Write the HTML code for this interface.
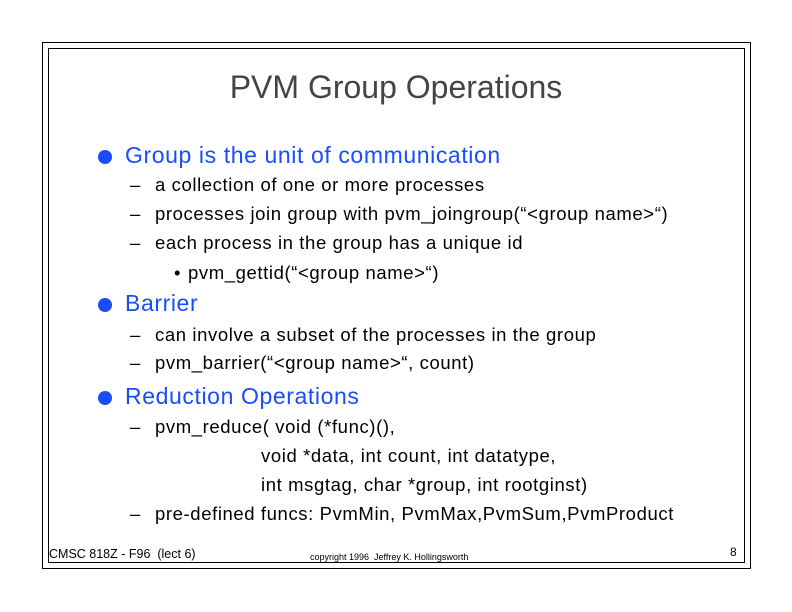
<!DOCTYPE html>
<html><head><style>
body{margin:0;width:792px;height:612px;background:#fff;position:relative;font-family:"Liberation Sans",sans-serif;overflow:hidden}
.b{position:absolute;border:1px solid #000}
.t{position:absolute;white-space:nowrap;line-height:1}
.h{color:#1a4cff;font-size:23px;letter-spacing:0.6px}
.d{color:#000;font-size:18.5px;letter-spacing:0.6px}
.dot{position:absolute;width:14px;height:14px;border-radius:50%;background:#1a4cff}
</style></head><body>
<div class="b" style="left:42px;top:42px;width:707px;height:525px"></div>
<div class="b" style="left:48px;top:48px;width:695px;height:513px"></div>
<div class="t" style="left:0;width:792px;text-align:center;top:71px;font-size:32px;color:#444">PVM Group Operations</div>

<div class="dot" style="left:98px;top:150px"></div>
<div class="t h" style="left:125px;top:144px">Group is the unit of communication</div>
<div class="t d" style="left:130px;top:176px">–</div><div class="t d" style="left:155px;top:176px">a collection of one or more processes</div>
<div class="t d" style="left:130px;top:205px">–</div><div class="t d" style="left:155px;top:205px">processes join group with pvm_joingroup(“&lt;group name&gt;“)</div>
<div class="t d" style="left:130px;top:234px">–</div><div class="t d" style="left:155px;top:234px">each process in the group has a unique id</div>
<div class="t d" style="left:174px;top:264px">•</div><div class="t d" style="left:188px;top:264px">pvm_gettid(“&lt;group name&gt;“)</div>

<div class="dot" style="left:98px;top:298px"></div>
<div class="t h" style="left:125px;top:292px">Barrier</div>
<div class="t d" style="left:130px;top:326px">–</div><div class="t d" style="left:155px;top:326px">can involve a subset of the processes in the group</div>
<div class="t d" style="left:130px;top:354px">–</div><div class="t d" style="left:155px;top:354px">pvm_barrier(“&lt;group name&gt;“, count)</div>

<div class="dot" style="left:98px;top:391px"></div>
<div class="t h" style="left:125px;top:385px">Reduction Operations</div>
<div class="t d" style="left:130px;top:418px">–</div><div class="t d" style="left:155px;top:418px">pvm_reduce( void (*func)(),</div>
<div class="t d" style="left:261px;top:447px">void *data, int count, int datatype,</div>
<div class="t d" style="left:261px;top:476px">int msgtag, char *group, int rootginst)</div>
<div class="t d" style="left:130px;top:505px">–</div><div class="t d" style="left:155px;top:505px">pre-defined funcs: PvmMin, PvmMax,PvmSum,PvmProduct</div>

<div class="t" style="left:49px;top:548px;font-size:12.5px">CMSC 818Z - F96&nbsp;&nbsp;(lect 6)</div>
<div class="t" style="left:310px;top:553px;font-size:9px">copyright 1996&nbsp;&nbsp;Jeffrey K. Hollingsworth</div>
<div class="t" style="left:730px;top:546px;font-size:12px">8</div>
</body></html>
